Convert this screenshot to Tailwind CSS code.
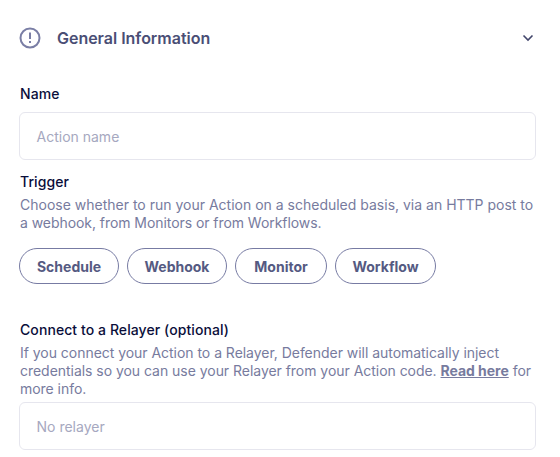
<!DOCTYPE html>
<html lang="en"><head><meta charset="utf-8"><title>General Information</title>
<script src="https://cdn.jsdelivr.net/npm/@tailwindcss/browser@4"></script></head>
<body class="bg-white font-['Inter',sans-serif] text-sm text-[#777b9e] overflow-hidden">
<main class="w-[560px] h-[457px] pl-[19px] pr-6 pt-[26px]">
<header class="flex items-center h-6">
<svg class="w-[22px] h-[22px] mb-px" viewBox="0 0 22 22" fill="none" stroke="#7a7ea5" stroke-width="2"><circle cx="11" cy="11" r="9.5"/><path d="M11 5.5v6.5M11 14v2"/></svg>
<h1 class="ml-4 text-base font-semibold tracking-[-0.02px] text-[#4a4e75]">General Information</h1>
<svg class="ml-auto mr-0.5 w-3 h-3" viewBox="0 0 12 12" fill="none" stroke="#42466b" stroke-width="1.6"><path d="M1.5 3.5 6 8l4.5-4.5"/></svg>
</header>
<section class="mt-[34px]">
<h2 class="pl-px h-5 leading-5 font-medium tracking-[0.08px] text-[#0a0e3a]">Name</h2>
<div class="mt-2 h-12 rounded-md border border-[#e6e6ee] pl-[16.5px] pt-0.5 flex items-center text-[#a6a8c0]">Action name</div>
</section>
<section class="mt-3">
<h2 class="pl-px h-5 leading-5 font-medium tracking-[0.08px] text-[#0a0e3a]">Trigger</h2>
<p class="pl-px mt-1 leading-[18px] whitespace-nowrap">Choose whether to run your Action on a scheduled basis, via an HTTP post to<br><span class="tracking-[-0.06px]">a webhook, from Monitors or from Workflows.</span></p>
<div class="mt-4 flex gap-2 font-bold text-[#555a82]">
<button class="w-[100px] h-9 pt-0.5 rounded-full border border-[#777ba3]">Schedule</button>
<button class="w-[100px] h-9 pt-0.5 rounded-full border border-[#777ba3]">Webhook</button>
<button class="w-[92px] h-9 pt-0.5 rounded-full border border-[#777ba3]">Monitor</button>
<button class="w-[101px] h-9 pt-0.5 rounded-full border border-[#777ba3]">Workflow</button>
</div>
</section>
<section class="mt-9">
<h2 class="pl-px h-5 leading-5 font-medium tracking-[0.08px] text-[#0a0e3a]">Connect to a Relayer (optional)</h2>
<p class="pl-px mt-1 leading-[18px] tracking-[-0.035px] whitespace-nowrap">If you connect your Action to a Relayer, Defender will automatically inject<br>credentials so you can use your Relayer from your Action code. <a class="font-bold underline">Read here</a> for<br>more info.</p>
<div class="mt-1 h-12 rounded-md border border-[#e6e6ee] pl-[16.5px] pt-0.5 flex items-center text-[#a6a8c0]">No relayer</div>
</section>
</main></body></html>
